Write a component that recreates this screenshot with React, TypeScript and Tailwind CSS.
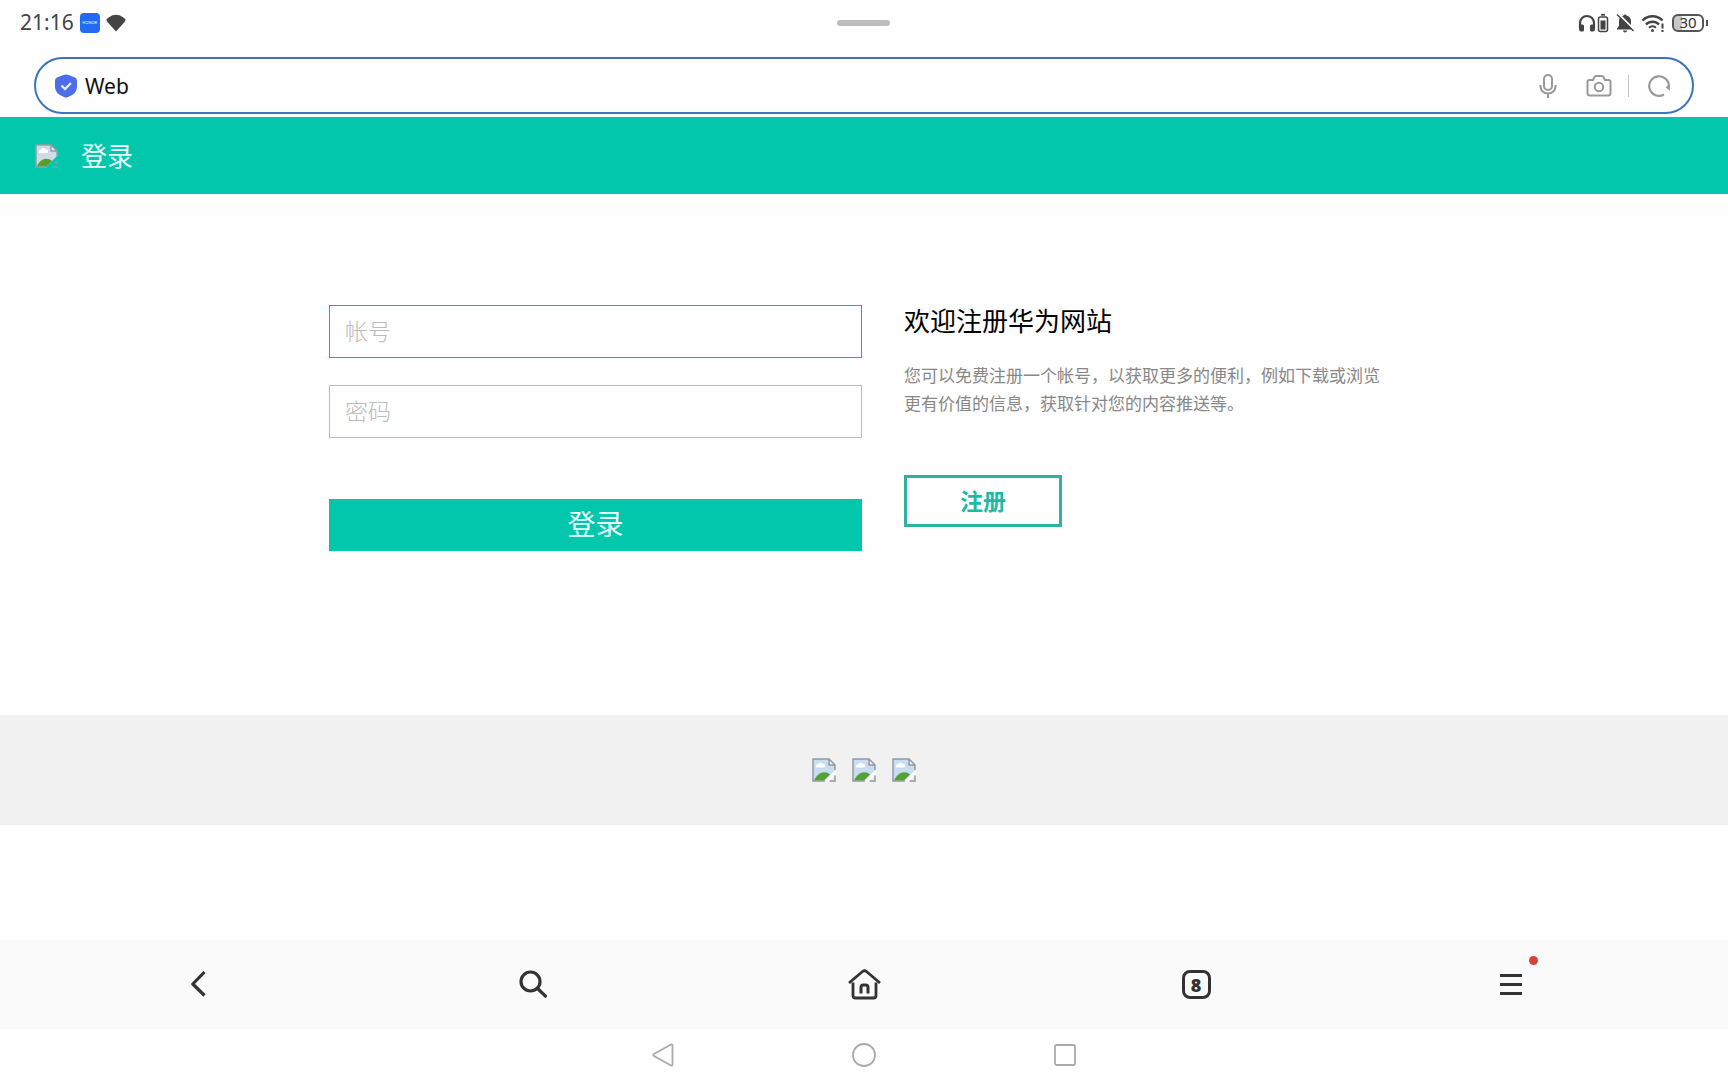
import { useState } from "react";

// ================= ICONS =================
function BrokenImage() {
  return (
    <svg viewBox="0 0 24 24" className="size-6 shrink-0" aria-hidden="true">
      <path d="M1 1H17L23 7V12L12 23H1Z" fill="#c9dbf5" />
      <path d="M4 9.500a2.500 2.500 0 0 1 2-3.500 3 3 0 0 1 5 0 2 2 0 0 1 1.500 3.500Z" fill="#fff" />
      <path d="M2 22.500C5 15 13 11.500 18 16.500L12 22.500Z" fill="#4fa52f" />
      <path d="M17 1V7H23Z" fill="#f4f6f8" />
      <path
        d="M13 23H1V1H17L23 7V12M17 1V7H23M23 17.500V23H17.500"
        fill="none"
        stroke="#959a9b"
        strokeWidth="1.500"
      />
      <path d="M12.500 23.500L24 12V15.500L16 23.500Z" fill="#fff" fillOpacity="0.700" />
    </svg>
  );
}

// logo variant, the torn corner lets the header show through
function BrokenLogo() {
  return (
    <svg viewBox="0 0 24 24" className="size-6 shrink-0" aria-hidden="true">
      <path d="M1 1H16L22 7V12L12 22H1Z" fill="#cfdbea" />
      <path d="M4 9a2.500 2.500 0 0 1 2-3.500 3 3 0 0 1 5 0 2 2 0 0 1 1.500 3.500Z" fill="#fff" />
      <path d="M2 22C5 15 12 12.500 17 17L12 22Z" fill="#5a9e2f" />
      <path d="M16 1V7H22Z" fill="#eef3f5" />
      <path d="M12 23H1V1H16L22 7V12M16 1V7H22" fill="none" stroke="#8fa5a3" strokeWidth="1.500" />
      <path d="M23 17V19L21 20L19 18ZM18 22.500H23V24H18Z" fill="#7fa39d" />
    </svg>
  );
}

function StatusIcons() {
  return (
    <div className="flex items-center">
      {/* headphones + battery */}
      <svg viewBox="0 0 31 20" className="h-5 w-[31px]" fill="none" stroke="#444">
        <path d="M2 15V10a7 7 0 0 1 14 0v5" strokeWidth="2.200" />
        <path d="M1 11.500h3.500q1.500 0 1.500 1.500v4q0 1.500-1.500 1.500H3Q1 18.500 1 16Z" fill="#444" stroke="none" />
        <path d="M17 11.500h-3.500q-1.500 0-1.500 1.500v4q0 1.500 1.500 1.500H15q2 0 2-2.500Z" fill="#444" stroke="none" />
        <rect x="20.500" y="4" width="9" height="14.500" rx="2" strokeWidth="1.500" />
        <path d="M23 1.800h4" strokeWidth="1.800" />
        <rect x="22.500" y="7.500" width="5" height="9" fill="#444" stroke="none" />
      </svg>
      {/* muted bell */}
      <svg viewBox="0 0 20 20" className="ml-1.5 size-5">
        <path
          d="M2 15.500L4 13V8a6 6 0 0 1 4.500-5.500 1.600 1.600 0 0 1 3 0A6 6 0 0 1 16 8v5l2 2.500v1H2Z"
          fill="#444"
        />
        <path d="M8 17.500h4a2 2 0 0 1-4 0Z" fill="#444" />
        <path d="M3.500 1L20 17.500" stroke="#fff" strokeWidth="2" />
        <path d="M2 1.500L18.500 18" stroke="#444" strokeWidth="1.500" />
      </svg>
      {/* wifi */}
      <svg viewBox="0 0 24 20" className="ml-1.5 h-5 w-6" fill="none" stroke="#444">
        <path d="M1.500 7.500a14 14 0 0 1 20 0" strokeWidth="2.500" />
        <path d="M5 11.500a9 9 0 0 1 13 0" strokeWidth="2.400" />
        <path d="M8 14.800a5 5 0 0 1 7 0" strokeWidth="2" />
        <circle cx="11.500" cy="17.500" r="1.500" fill="#444" stroke="none" />
        <path d="M21.500 10.500v5M21.500 17v2" strokeWidth="2" />
      </svg>
      {/* battery */}
      <div className="ml-[7px] flex h-[18px] w-8 items-center justify-center rounded-md border-2 border-[#555] bg-linear-to-r from-[#c8c8c8] from-30% to-white to-30% text-[15px] leading-none text-[#333]">
        30
      </div>
      <div className="ml-0.5 h-1.5 w-0.5 bg-[#555]" />
    </div>
  );
}

export default function App() {
  const [url, setUrl] = useState("Web");

  return (
    <div className="flex min-h-screen flex-col bg-[#fefefe] font-['Noto_Sans','Noto_Sans_CJK_SC',sans-serif] text-black">
      {/* STATUS BAR */}
      <div className="grid h-[45px] grid-cols-3 items-center px-5">
        <div className="flex items-center gap-1.5">
          <span className="text-[21px] leading-none text-[#444]">21:16</span>
          <span className="flex size-5 items-center justify-center rounded bg-[#216bf3] text-[4px] leading-none text-white">
            HONOR
          </span>
          <svg viewBox="0 0 20 18" className="h-[18px] w-5">
            <path d="M0.500 5.500Q1 4.500 3 3.200Q10-1.500 17 3.200Q19 4.500 19.500 5.500Q19.700 6.500 18.500 8L10 17.500L1.500 8Q0.300 6.500 0.500 5.500Z" fill="#444" />
          </svg>
        </div>
        <div className="mx-auto h-1.5 w-[53px] rounded-full bg-[#bdbdbd]" />
        <div className="justify-self-end">
          <StatusIcons />
        </div>
      </div>

      {/* ADDRESS BAR */}
      <div className="px-[34px] pt-3 pb-[3px]">
        <div className="flex h-[57px] items-center rounded-full border-2 border-[#3e74b9] pr-[21px] pl-[19px]">
          <svg viewBox="0 0 22 24" className="h-6 w-[22px] shrink-0">
            <path
              d="M11 0.500Q13 0.500 20 3.500Q22 4.500 22 6.500V13Q22 20 12.500 23.200Q11 24 9.500 23.200Q0 20 0 13V6.500Q0 4.500 2 3.500Q9 0.500 11 0.500Z"
              fill="#4d6cea"
            />
            <path d="M6.500 11.500l3.500 3.500 6-6" fill="none" stroke="#e4eaff" strokeWidth="2.400" />
          </svg>
          <input
            aria-label="网址"
            value={url}
            onChange={(e) => setUrl(e.target.value)}
            className="min-w-0 flex-1 pl-2 text-[21px] leading-7 text-[#111] outline-none"
          />
          <div className="flex items-center text-[#999]">
            <button aria-label="语音">
              <svg viewBox="0 0 18 24" className="h-6 w-[18px]" fill="none" stroke="currentColor" strokeWidth="2">
                <rect x="5" y="1" width="8" height="15" rx="4" />
                <path d="M1.500 11v1.500a7.500 7 0 0 0 15 0V11M9 19.500V24" />
              </svg>
            </button>
            <button aria-label="拍照" className="ml-[29px]">
              <svg viewBox="0 0 26 24" className="h-6 w-[26px]" fill="none" stroke="currentColor" strokeWidth="2">
                <path d="M3.500 6H7L8.500 3q.5-1 1.500-1h6q1 0 1.500 1L19 6h3.500Q24.500 6 24.500 8V19q0 2.500-2.500 2.500H4Q1.500 21.500 1.500 19V8Q1.500 6 3.500 6Z" />
                <circle cx="13" cy="13" r="4.200" />
              </svg>
            </button>
            <div className="ml-4 h-[22px] w-px bg-[#c4c4c4]" />
            <button aria-label="刷新" className="ml-[18px]">
              <svg viewBox="0 0 24 24" className="size-6" fill="none" stroke="currentColor" strokeWidth="2.200">
                <path d="M17 20.500A9.800 9.800 0 1 1 21.800 13" />
                <path d="M22.800 11V17L18.500 13Z" fill="currentColor" stroke="none" />
              </svg>
            </button>
          </div>
        </div>
      </div>

      {/* HEADER */}
      <header className="flex h-[77px] items-center gap-[22px] bg-[#02c7ad] px-[35px]">
        <BrokenLogo />
        <h1 className="text-[26px] leading-none text-[#e8fffc]">登录</h1>
      </header>

      {/* LOGIN + REGISTER */}
      <main className="flex-1">
        <div className="mx-auto flex w-full max-w-[1070px] gap-[42px] pt-[111px] pb-[164px]">
          <form className="flex flex-1 flex-col" onSubmit={(e) => e.preventDefault()}>
            <input
              aria-label="帐号"
              placeholder="帐号"
              className="h-[53px] border border-[#1fae98] px-[15px] pb-0.5 text-[23px] font-light outline-none placeholder:text-[#bbb]"
            />
            <input
              aria-label="密码"
              type="password"
              placeholder="密码"
              className="mt-[27px] h-[53px] border border-[#bbb] px-[15px] pb-0.5 text-[23px] font-light outline-none placeholder:text-[#bbb]"
            />
            <button
              type="submit"
              className="mt-[61px] h-[52px] bg-[#02c7ad] pb-0.5 text-[28px] leading-none text-[#e8fffc]"
            >
              登录
            </button>
          </form>

          <section className="w-[495px]">
            <h2 className="text-[26px] leading-8">欢迎注册华为网站</h2>
            <p className="mt-[25px] pr-2 text-[17px] leading-7 text-[#888]">
              您可以免费注册一个帐号，以获取更多的便利，例如下载或浏览更有价值的信息，获取针对您的内容推送等。
            </p>
            <button className="mt-[57px] h-[52px] w-[158px] border-3 border-[#2fb3a1] text-[23px] leading-none font-bold text-[#1dbba5]">
              注册
            </button>
          </section>
        </div>

        <footer className="flex h-[110px] items-center justify-center gap-4 bg-[#f1f1f1]">
          <BrokenImage />
          <BrokenImage />
          <BrokenImage />
        </footer>
      </main>

      {/* BROWSER TOOLBAR */}
      <nav className="grid h-[89px] grid-cols-5 items-center justify-items-center bg-[#fafafa] px-[34px] text-[#333]">
        <button aria-label="后退">
          <svg viewBox="0 0 18 30" className="h-[30px] w-[18px]" fill="none" stroke="currentColor" strokeWidth="3.200" strokeLinejoin="round">
            <path d="M13.500 2L1.800 14L13.500 25.500" />
          </svg>
        </button>
        <button aria-label="搜索">
          <svg viewBox="0 0 30 30" className="size-[30px]" fill="none" stroke="currentColor" strokeWidth="3.200">
            <circle cx="13.500" cy="11.500" r="9.500" />
            <path d="M20.500 18.500L29.500 27" />
          </svg>
        </button>
        <button aria-label="主页">
          <svg viewBox="0 0 34 32" className="h-8 w-[34px]" fill="none" stroke="currentColor" strokeWidth="2.800">
            <path d="M2 14L15.500 2.500Q17.500 1 19.500 2.500L33 14" />
            <path d="M6 13.500V26.500q0 2.500 2.500 2.500H26.500q2.500 0 2.500-2.500V13.500" />
            <path d="M14 24.500V18.500q0-2.500 2.500-2.500h2q2.500 0 2.500 2.500v6" strokeWidth="3" />
          </svg>
        </button>
        <button className="flex size-[29px] items-center justify-center rounded-lg border-3 border-[#333] text-lg leading-none font-black">
          8
        </button>
        <button aria-label="菜单" className="relative w-14">
          <svg viewBox="0 0 22 22" className="size-[22px]" stroke="currentColor" strokeWidth="3">
            <path d="M0 1.500H22M0 10.500H22M0 19.500H22" />
          </svg>
          <span className="absolute -top-[18px] left-[29px] size-[9px] rounded-full bg-[#dc403b]" />
        </button>
      </nav>

      {/* SYSTEM NAVIGATION */}
      <nav className="flex h-[51px] items-center justify-center gap-[177px] text-[#aaa]">
        <button aria-label="返回">
          <svg viewBox="0 0 24 24" className="size-6" fill="none" stroke="currentColor" strokeWidth="1.800" strokeLinejoin="round">
            <path d="M20 1.500Q21.500 1 21.500 2.500V21.500Q21.500 23 20 22.500L3 13Q1.500 12 3 11Z" />
          </svg>
        </button>
        <button aria-label="桌面">
          <svg viewBox="0 0 24 24" className="size-6" fill="none" stroke="currentColor" strokeWidth="1.800">
            <circle cx="12" cy="12" r="11" />
          </svg>
        </button>
        <button aria-label="最近任务">
          <svg viewBox="0 0 24 24" className="size-6" fill="none" stroke="currentColor" strokeWidth="1.800">
            <rect x="2" y="2" width="20" height="20" rx="1.500" />
          </svg>
        </button>
      </nav>
    </div>
  );
}
